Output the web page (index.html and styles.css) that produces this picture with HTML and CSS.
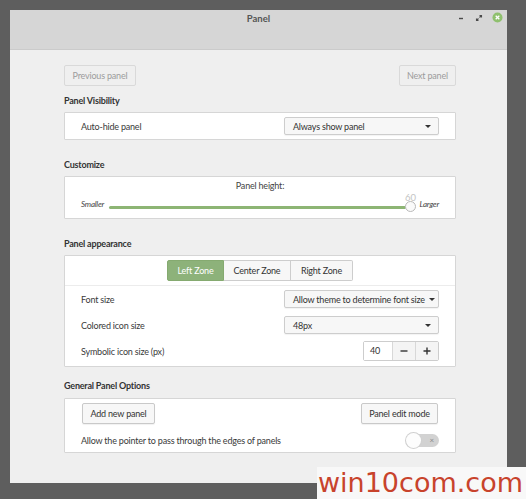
FILE: index.html
```html
<!DOCTYPE html>
<html>
<head>
<meta charset="utf-8">
<link rel="stylesheet" href="styles.css">
</head>
<body>
<div class="window">
  <div class="titlebar">
    <div></div>
    <div class="title">Panel</div>
    <div class="controls">
      <svg class="ctl" width="10" height="10" viewBox="0 0 10 10"><path d="M3 5.5h4" stroke="#4a4a4a" stroke-width="1.4"/></svg>
      <svg class="ctl" width="10" height="10" viewBox="0 0 10 10"><path d="M5.5 2.5h2v2M7.5 2.5l-2 2M4.5 7.5h-2v-2M2.5 7.5l2-2" stroke="#4a4a4a" stroke-width="1.1" fill="none"/></svg>
      <svg class="ctl" width="11" height="11" viewBox="0 0 11 11"><circle cx="5.5" cy="5.5" r="5" fill="#8fc06e"/><path d="M3.7 3.7l3.6 3.6M7.3 3.7l-3.6 3.6" stroke="#fff" stroke-width="1.3"/></svg>
    </div>
  </div>
  <div class="content">
    <div class="nav">
      <div class="btn disabled prev">Previous panel</div>
      <div class="btn disabled next">Next panel</div>
    </div>

    <div class="heading h1">Panel Visibility</div>
    <div class="box box1">
      <div class="row">
        <span>Auto-hide panel</span>
        <div class="combo"><span>Always show panel</span><span class="arrow"></span></div>
      </div>
    </div>

    <div class="heading h2">Customize</div>
    <div class="box box2">
      <div class="slider-title">Panel height:</div>
      <div class="slider-row">
        <span class="ital">Smaller</span>
        <div class="track"><span class="val">60</span><span class="knob"></span></div>
        <span class="ital">Larger</span>
      </div>
    </div>

    <div class="heading h3">Panel appearance</div>
    <div class="box box3">
      <div class="tabs-wrap">
        <div class="tabs">
          <div class="tab active t1">Left Zone</div>
          <div class="tab t2">Center Zone</div>
          <div class="tab t3">Right Zone</div>
        </div>
      </div>
      <div class="row r26">
        <span>Font size</span>
        <div class="combo"><span>Allow theme to determine font size</span><span class="arrow"></span></div>
      </div>
      <div class="row r26">
        <span>Colored icon size</span>
        <div class="combo"><span>48px</span><span class="arrow"></span></div>
      </div>
      <div class="row r26">
        <span>Symbolic icon size (px)</span>
        <div class="spin">
          <div class="spin-entry">40</div>
          <div class="spin-btn minus"><svg width="8" height="8" viewBox="0 0 8 8"><path d="M0.5 4h7" stroke="#333" stroke-width="1.4"/></svg></div>
          <div class="spin-btn plus"><svg width="8" height="8" viewBox="0 0 8 8"><path d="M0.5 4h7M4 0.5v7" stroke="#333" stroke-width="1.4"/></svg></div>
        </div>
      </div>
    </div>

    <div class="heading h4">General Panel Options</div>
    <div class="box box4">
      <div class="row btn-row">
        <div class="btn add">Add new panel</div>
        <div class="btn edit">Panel edit mode</div>
      </div>
      <div class="row toggle-row">
        <span>Allow the pointer to pass through the edges of panels</span>
        <div class="switch"><span class="sw-knob"></span><span class="sw-x">×</span></div>
      </div>
    </div>
  </div>
</div>
<div class="watermark">win10com.com</div>
</body>
</html>
```

FILE: styles.css
```css
* { box-sizing: border-box; }
body {
  margin: 0;
  width: 526px;
  height: 499px;
  overflow: hidden;
  position: relative;
  background: #5e5e5e;
  font-family: "Lato", "Noto Sans", sans-serif;
  font-size: 9px;
  letter-spacing: -0.2px;
  color: #3a3a3a;
}
.window {
  margin: 10px 0 0 10px;
  width: 497px;
  height: 473px;
  background: #efefef;
}
.titlebar {
  height: 40px;
  background: #d6d6d6;
  border-bottom: 1px solid #cbcbcb;
  display: grid;
  grid-template-columns: 1fr auto 1fr;
  align-items: start;
}
.title {
  padding-top: 2px;
  line-height: 14px;
  font-weight: bold;
  color: #555;
  font-size: 9.5px;
  letter-spacing: 0;
}
.controls {
  justify-self: end;
  display: flex;
  align-items: center;
  gap: 8px;
  padding-top: 2px;
  padding-right: 4px;
}
.ctl { display: block; }

.content {
  padding: 0 51px 0 54px;
}
.nav {
  margin-top: 15px;
  display: flex;
  justify-content: space-between;
}
.btn {
  height: 21px;
  line-height: 19px;
  padding: 0 6px;
  border: 1px solid #c9c9c9;
  border-radius: 2px;
  background: #f7f7f7;
  color: #333;
  box-shadow: 0 1px 1px rgba(0,0,0,0.06);
  text-align: center;
  white-space: nowrap;
}
.btn.disabled {
  background: #efefef;
  border-color: #d9d9d9;
  color: #9c9c9c;
  box-shadow: none;
}
.prev { width: 72px; }
.next { width: 57px; }

.heading {
  font-weight: bold;
  line-height: 14px;
  color: #333;
}
.h1 { margin-top: 8px; margin-bottom: 4px; }
.h2 { margin-top: 18px; margin-bottom: 4px; }
.h3 { margin-top: 18px; margin-bottom: 4px; }
.h4 { margin-top: 12px; margin-bottom: 5px; }

.box {
  background: #fff;
  border: 1px solid #d6d6d6;
  border-radius: 1px;
}
.row {
  display: flex;
  align-items: center;
  justify-content: space-between;
  padding: 0 16px;
  white-space: nowrap;
}
.box1 { height: 28px; }
.box1 .row { height: 26px; }

.combo {
  width: 155px;
  height: 18px;
  display: flex;
  align-items: center;
  justify-content: space-between;
  gap: 4px;
  padding: 0 7px 0 8px;
  border: 1px solid #cdcdcd;
  border-radius: 2px;
  background: #f7f7f7;
  box-shadow: 0 1px 1px rgba(0,0,0,0.05);
  color: #333;
  white-space: nowrap;
}
.arrow {
  width: 0; height: 0;
  border-left: 3px solid transparent;
  border-right: 3px solid transparent;
  border-top: 3px solid #333;
}

.box2 { height: 43px; padding-top: 2px; }
.slider-title { text-align: center; line-height: 14px; color: #444; }
.slider-row {
  margin-top: 6px;
  height: 14px;
  display: flex;
  align-items: center;
  padding: 0 16px;
}
.ital { font-style: italic; font-size: 8px; color: #444; margin-top: -4px; }
.track {
  flex: 1;
  height: 3px;
  margin: 2px 13px 0 5px;
  background: #8db574;
  border-radius: 2px;
  position: relative;
}
.knob {
  position: absolute;
  right: -10px;
  top: -5px;
  width: 11px;
  height: 11px;
  border-radius: 50%;
  background: #fafafa;
  border: 1px solid #b9b9b9;
}
.val {
  position: absolute;
  right: -10px;
  top: -13px;
  width: 12px;
  text-align: center;
  color: #c4c4c4;
  font-size: 9.5px;
  line-height: 10px;
}

.box3 { height: 112px; }
.tabs-wrap {
  padding: 4px 0;
  border-bottom: 1px solid #ececec;
  display: flex;
  justify-content: center;
}
.tabs { display: flex; height: 21px; }
.tab {
  line-height: 19px;
  text-align: center;
  border: 1px solid #cdcdcd;
  background: #f7f7f7;
  color: #333;
  white-space: nowrap;
}
.tab + .tab { border-left: none; }
.tab.active {
  background: #8db27a;
  border-color: #85aa70;
  color: #fff;
  border-radius: 2px 0 0 2px;
}
.t1 { width: 57px; }
.t2 { width: 67px; }
.t3 { width: 62px; border-radius: 0 2px 2px 0; }
.r26 { height: 26px; }

.spin {
  display: flex;
  width: 76px;
  height: 20px;
  border: 1px solid #cdcdcd;
  border-radius: 2px;
}
.spin-entry {
  width: 28px;
  padding-left: 6px;
  line-height: 18px;
  background: #fff;
  color: #333;
}
.spin-btn {
  flex: 1;
  display: flex;
  align-items: center;
  justify-content: center;
  background: #f4f4f4;
  border-left: 1px solid #d8d8d8;
}
.spin-btn svg { display: block; }

.box4 { height: 55px; padding-top: 4px; }
.btn-row { padding: 0 17px 0 17px; }
.add { width: 73px; padding: 0; }
.edit { width: 77px; padding: 0; }
.toggle-row { margin-top: 5px; height: 23px; }
.switch {
  position: relative;
  width: 32px;
  height: 13px;
  border-radius: 7px;
  background: #d2d2d2;
}
.sw-knob {
  position: absolute;
  left: -1px;
  top: -1px;
  width: 15px;
  height: 15px;
  border-radius: 50%;
  background: #fdfdfd;
  box-shadow: 0 0 0 1px #d0d0d0;
}
.sw-x {
  position: absolute;
  right: 5px;
  top: 0;
  line-height: 12px;
  font-size: 8px;
  color: #8a8a8a;
}

.watermark {
  position: absolute;
  left: 317px;
  top: 467px;
  width: 209px;
  height: 32px;
  background: #f8f8f8;
  color: #c8432c;
  font-family: "DejaVu Sans", sans-serif;
  font-size: 27px;
  letter-spacing: 0;
  line-height: 32px;
  padding-left: 1px;
  white-space: nowrap;
  overflow: hidden;
}
```
